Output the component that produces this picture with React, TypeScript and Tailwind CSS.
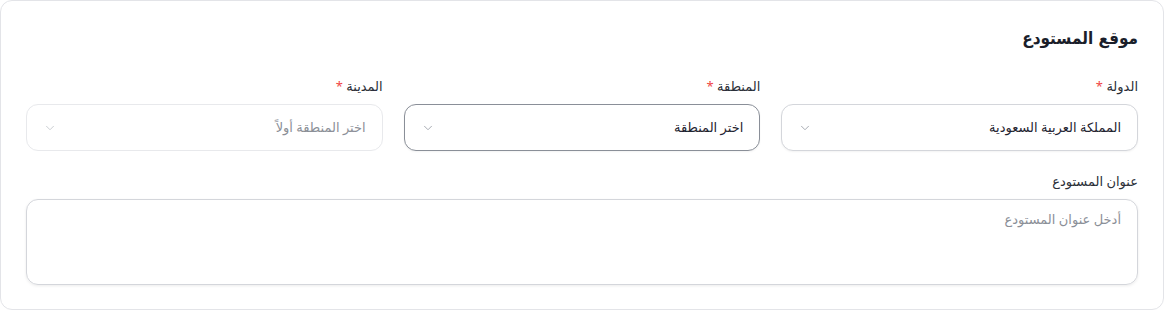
import { ChevronDown } from "lucide-react";

const font = { fontFamily: '"Noto Sans", "DejaVu Sans", sans-serif' };

function SelectField({ label, value, tone }: { label: string; value: string; tone: "filled" | "focus" | "disabled" }) {
    const box =
        tone === "focus"
            ? "border-[#8a8f98]"
            : tone === "disabled"
                ? "border-[#e8e9ec]"
                : "border-[#d4d6db]";
    const text = tone === "disabled" ? "text-[#8b8f97]" : "text-[#1f2430]";
    return (
        <div className="flex flex-col gap-[8px]">
            <p className="text-[13px] leading-[20px] text-[#2b2f38]">
                {label} <span className="text-[#ef4444]">*</span>
            </p>
            <div className={`h-[47px] rounded-[12px] border ${box} bg-white flex items-center justify-between pr-[16px] pl-[16px] ${tone === "disabled" ? "" : "shadow-[0_1px_2px_rgba(0,0,0,0.05)]"}`}>
                <span className={`text-[13px] ${text}`}>{value}</span>
                <ChevronDown className={`w-[14px] h-[14px] ${tone === "disabled" ? "text-[#c4c7cc]" : "text-[#9ca0a8]"}`} strokeWidth={1.5} />
            </div>
        </div>
    );
}

export default function App() {
    return (
        <div dir="rtl" style={font} className="w-[1164px] h-[311px] bg-white">
            <div className="h-[310px] rounded-[12px] border border-[#e3e4e8] px-[25px] pt-[23px]">
                <h2 style={{ fontFamily: '"DejaVu Sans Condensed", "DejaVu Sans", sans-serif' }} className="text-[17px] leading-[28px] font-semibold text-[#1a1e2a]">موقع المستودع</h2>
                <div className="grid grid-cols-3 gap-[21px] mt-[24px]">
                    <SelectField label="الدولة" value="المملكة العربية السعودية" tone="filled" />
                    <SelectField label="المنطقة" value="اختر المنطقة" tone="focus" />
                    <SelectField label="المدينة" value="اختر المنطقة أولاً" tone="disabled" />
                </div>
                <div className="flex flex-col gap-[8px] mt-[20px]">
                    <p className="text-[13px] leading-[20px] text-[#2b2f38]">عنوان المستودع</p>
                    <textarea
                        placeholder="أدخل عنوان المستودع"
                        className="h-[86px] resize-none rounded-[12px] border border-[#d4d6db] shadow-[0_1px_3px_rgba(0,0,0,0.08)] px-[16px] py-[10px] text-[13px] placeholder:text-[#8b8f97] outline-none"
                        style={font}
                    />
                </div>
            </div>
        </div>
    );
}
